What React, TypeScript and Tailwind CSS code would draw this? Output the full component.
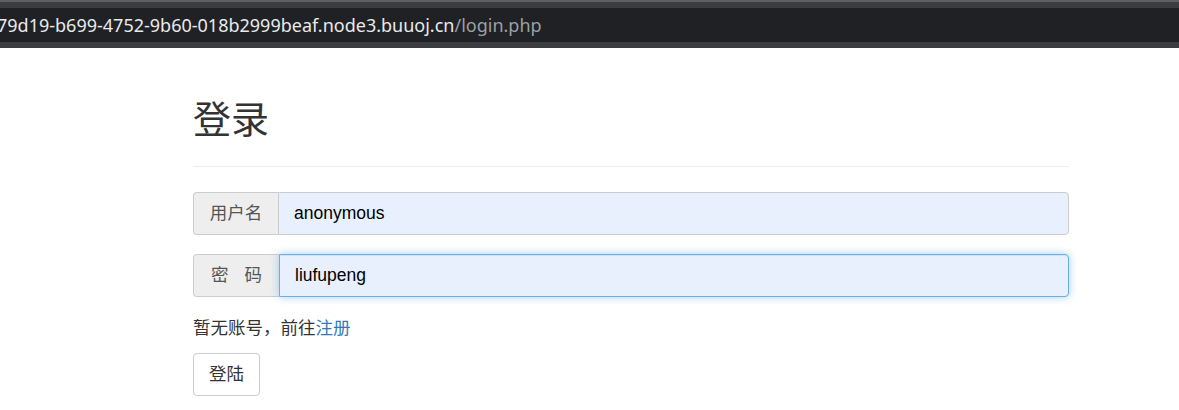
import React from "react";

const cjk = "font-['Liberation_Sans','Noto_Sans_CJK_SC',sans-serif]";

export default function App() {
  return (
    <div className={`w-[1179px] h-[410px] bg-white overflow-hidden ${cjk}`}>
      <div className="h-[2px] bg-[#5f6063]" />
      <div className="h-[6px] bg-[#3c3d40]" />
      <div className="h-[34px] bg-[#202124] flex items-center overflow-hidden">
        <span className="whitespace-nowrap text-[18px] font-['Noto_Sans',sans-serif] ml-[-3px] text-[#e8eaed]">
          79d19-b699-4752-9b60-018b2999beaf.node3.buuoj.cn
          <span className="text-[#9aa0a6]">/login.php</span>
        </span>
      </div>
      <div className="h-[6px] bg-[#3c3d40]" />
      <div className="ml-[193px] w-[876px] text-[#333]">
        <h1 className="mt-[50px] text-[38px] leading-[44px] font-normal">登录</h1>
        <div className="mt-[24px] h-px bg-[#eee]" />
        <div className="mt-[25px] flex h-[43px] text-[17.5px]">
          <div className="w-[85px] flex items-center justify-center bg-[#eee] border border-[#ccc] rounded-l-[4px] text-[#555] border-r-0">
            用户名
          </div>
          <div className="flex-1 flex items-center bg-[#e8f0fe] border border-[#ccc] rounded-r-[4px] pl-[15px] text-[17.5px] text-black">
            anonymous
          </div>
        </div>
        <div className="mt-[19px] flex h-[43px] text-[17.5px]">
          <div className="w-[86px] flex items-center justify-center bg-[#eee] border border-[#ccc] rounded-l-[4px] text-[#555] border-r-0 gap-[16px]">
            <span>密</span>
            <span>码</span>
          </div>
          <div className="flex-1 flex items-center bg-[#e8f0fe] border border-[#66afe9] rounded-r-[4px] pl-[15px] text-[17.5px] text-black shadow-[inset_0_1px_1px_rgba(0,0,0,0.075),0_0_8px_rgba(102,175,233,0.6)]">
            liufupeng
          </div>
        </div>
        <p className="mt-[19px] text-[17.5px] leading-[24px]">
          暂无账号，前往<span className="text-[#337ab7]">注册</span>
        </p>
        <button className="mt-[13px] h-[43px] w-[67px] border border-[#ccc] rounded-[4px] bg-white text-[17.5px] text-[#333]">
          登陆
        </button>
      </div>
    </div>
  );
}
